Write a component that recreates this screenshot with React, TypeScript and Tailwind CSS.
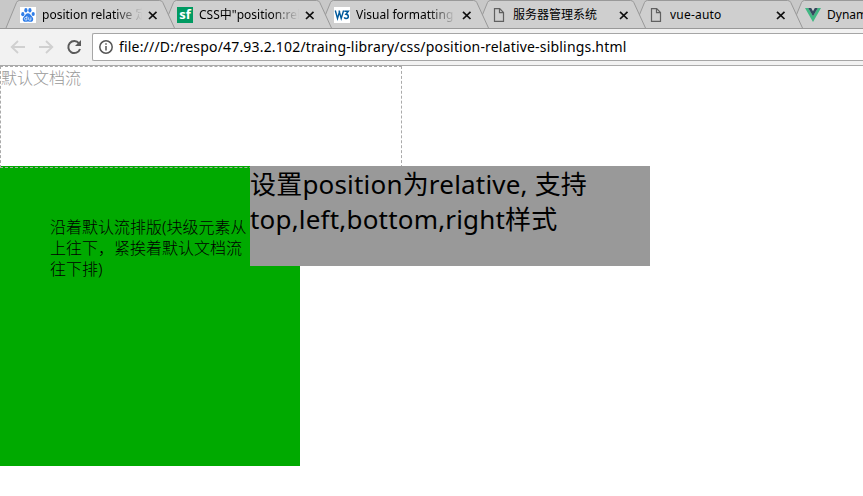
import React from "react";

const tabs = [
  { title: "position relative 定", icon: "baidu", fade: true, cls: "z-[6]" },
  { title: 'CSS中"position:relative', icon: "sf", fade: true, cls: "z-[5]" },
  { title: "Visual formatting m", icon: "w3", fade: true, cls: "z-[4]" },
  { title: "服务器管理系统", icon: "doc", fade: false, cls: "z-[3]" },
  { title: "vue-auto", icon: "doc", fade: false, cls: "z-[2] tracking-[0.2px]" },
  { title: "Dynamic", icon: "vue", fade: false, cls: "z-[1]" },
];

function Favicon({ name }: { name: string }) {
  if (name === "baidu")
    return (
      <svg width="16" height="16" className="block">
        <rect width="16" height="16" fill="#fff" />
        <g fill="#2f7de8">
          <ellipse cx="2.8" cy="7.2" rx="1.6" ry="2.1" />
          <ellipse cx="5.9" cy="3.3" rx="1.6" ry="2.2" />
          <ellipse cx="9.9" cy="3.3" rx="1.6" ry="2.2" />
          <ellipse cx="13.2" cy="7" rx="1.6" ry="2.1" />
          <path d="M8 6.3c2 0 2.4 1.800 4 3.200 1.800 1.500 1.800 5.300-1.200 5.300-1 0-1.800-.3-2.800-.3s-1.800.3-2.800.3c-3 0-3-3.800-1.200-5.300C5.600 8.100 6 6.300 8 6.300z" />
        </g>
        <path d="M6.900 9v4H5.500q-1-.2-1-1.300t1-1.200h1.400M8.700 10.300v2q0 .8.700.8h1.500v-2.800" fill="none" stroke="#fff" strokeWidth=".7" />
      </svg>
    );
  if (name === "sf")
    return (
      <div className="flex size-4 items-center justify-center bg-[#009a61] pb-px font-['Open_Sans',sans-serif] text-[13px] leading-none font-bold text-white">
        sf
      </div>
    );
  if (name === "w3")
    return (
      <svg width="16" height="16" className="block" fill="none" stroke="#005a9c">
        <rect width="16" height="16" fill="#fff" stroke="none" />
        <path d="M1.300 3.500l2.200 8 2.200-7.500M5 3.500l2.200 8 2.400-8" strokeWidth="1.400" />
        <path d="M10.300 4.200h4L12 7.200q2.300.2 2.300 2.200t-2.200 2.100q-1.200 0-1.900-1.200" strokeWidth="1.500" />
      </svg>
    );
  if (name === "vue")
    return (
      <svg width="16" height="16" className="block">
        <path d="M0 1h3.200L8 9.300 12.800 1H16L8 15z" fill="#41b883" />
        <path d="M3.200 1h3L8 4.200 9.800 1h3L8 9.300z" fill="#35495e" />
      </svg>
    );
  return (
    <svg width="16" height="16" className="block" fill="none" stroke="#606060" strokeWidth="1.2">
      <path d="M3.500 1.600h5.200l3.800 3.900v8.900h-9zM8.500 1.600v4.100h4" />
    </svg>
  );
}

function Tab({ tab }: { tab: (typeof tabs)[number] }) {
  return (
    <div className={"relative flex h-[29px] w-[157px] shrink-0 items-start pt-[7px] pl-[14px] " + tab.cls}>
      <svg className="absolute top-0 left-0 overflow-visible" width="157" height="29">
        <path d="M0 28L10.500 2.500Q11.300 .5 13.500 .5H153.500Q156 .5 156.800 2.500L168.500 28" fill="#cfcfcf" stroke="#999" />
      </svg>
      <div className="relative w-4 shrink-0">
        <Favicon name={tab.icon} />
      </div>
      <div
        className={
          "relative ml-[6px] w-[100px] overflow-hidden text-[12px] leading-4 whitespace-nowrap text-black" +
          (tab.fade ? " [mask-image:linear-gradient(to_right,black_72%,transparent)]" : "")
        }
      >
        {tab.title}
      </div>
      <svg className="relative mt-1 ml-[6px] shrink-0" width="10" height="9" stroke="#111" strokeWidth="1.7">
        <path d="M1 .8l7.500 7.200M8.500 .8L1 8" />
      </svg>
    </div>
  );
}

export default function App() {
  return (
    <div className="h-[496px] w-[863px] overflow-hidden bg-white font-['Noto_Sans','Noto_Sans_CJK_SC',sans-serif]">
      <div className="flex h-[28px] overflow-hidden bg-[#c8c8c8] pl-[6px]">
        {tabs.map((t) => (
          <Tab key={t.title} tab={t} />
        ))}
      </div>
      <div className="flex h-[38px] items-start border-t border-b border-t-[#999] border-b-[#aaa] bg-[#f2f2f2]">
        <svg width="92" height="36" fill="none" className="shrink-0">
          <g stroke="#d0d0d0" strokeWidth="1.800">
            <path d="M25 18H12M18 12l-6.300 6L18 24M39 18h13M46 12l6.300 6L46 24" />
          </g>
          <path d="M79 14.300A6 6 0 1 0 80 20" stroke="#5a5a5a" strokeWidth="2" />
          <path d="M81 11v6h-6z" fill="#5a5a5a" />
        </svg>
        <div className="mt-[4px] flex h-[28px] flex-1 items-center rounded-l-[2px] border border-r-0 border-[#a6a6a6] bg-white pl-[6px]">
          <svg width="14" height="14" fill="none" stroke="#555" strokeWidth="1.500" className="shrink-0">
            <circle cx="7" cy="7" r="6.200" />
            <path d="M7 6v4.500M7 3.300v1.500" />
          </svg>
          <span className="ml-[6px] text-[14px] leading-5 tracking-[0.185px] whitespace-nowrap text-black">
            file:///D:/respo/47.93.2.102/traing-library/css/position-relative-siblings.html
          </span>
        </div>
      </div>
      <main className="font-light">
        <div className="relative z-10 h-[102px] w-[402px] border border-dashed border-[#aaa] text-[16px] leading-[22px] text-[#999]">
          默认文档流
        </div>
        <div className="-mt-[2px] flex h-[300px] items-start">
          <div className="h-[300px] w-[300px] shrink-0 bg-[#0a0] px-[50px] pt-[51px] text-[16px] leading-[21px] text-black">
            <p className="whitespace-nowrap">沿着默认流排版(块级元素从</p>
            <p className="whitespace-nowrap">上往下，紧挨着默认文档流</p>
            <p>往下排)</p>
          </div>
          <div className="relative z-20 -ml-[50px] h-[100px] w-[400px] bg-[#999] pt-px text-[26px] leading-[35px] font-normal tracking-[0.19px] text-black">
            <p className="whitespace-nowrap">设置position为relative, 支持</p>
            <p className="whitespace-nowrap">top,left,bottom,right样式</p>
          </div>
        </div>
      </main>
    </div>
  );
}
